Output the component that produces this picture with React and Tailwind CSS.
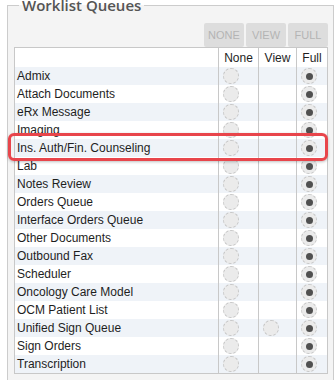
import React from "react";

const queues = [
    { name: "Admix" },
    { name: "Attach Documents" },
    { name: "eRx Message" },
    { name: "Imaging" },
    { name: "Ins. Auth/Fin. Counseling", highlight: true },
    { name: "Lab" },
    { name: "Notes Review" },
    { name: "Orders Queue" },
    { name: "Interface Orders Queue" },
    { name: "Other Documents" },
    { name: "Outbound Fax" },
    { name: "Scheduler" },
    { name: "Oncology Care Model" },
    { name: "OCM Patient List" },
    { name: "Unified Sign Queue", view: true },
    { name: "Sign Orders" },
    { name: "Transcription" },
];

function Radio({ checked }) {
    return (
        <span className="ml-[4px] flex h-4 w-4 items-center justify-center rounded-full border border-dashed border-[#c6c6c6] bg-[#ebebeb]">
            {checked && <span className="h-[7px] w-[7px] rounded-full bg-[#505050]"></span>}
        </span>
    );
}

function App() {
    return (
        <div className="h-[380px] overflow-hidden bg-white font-['Liberation_Sans',Arial,sans-serif] text-[12px] text-[#1e1e1e]">
            <fieldset className="ml-[7px] mr-[2px] border border-[#cccccc] bg-[#f4f4f4] pl-[6px] pr-[5px] pt-[13px] pb-4">
                <legend className="ml-[5px] px-[3px] font-['Open_Sans',sans-serif] text-[15px] leading-[10px] font-semibold text-[#555555]">
                    Worklist Queues
                </legend>

                <div className="flex justify-end gap-[2px]">
                    {["None", "View", "Full"].map((label) => (
                        <button
                            key={label}
                            className="h-[24px] w-[40px] rounded-[2px] bg-[#dddddd] text-[11px] uppercase text-[#b4b4b4]"
                        >
                            {label}
                        </button>
                    ))}
                </div>

                <div className="w-[314px] border border-[#c8c8c8] bg-white">
                    <div className="grid h-[19px] grid-cols-[204px_40px_38px_30px] items-center text-center">
                        <div className="h-full border-r border-[#c8c8c8]"></div>
                        <div className="flex h-full items-center justify-center border-r border-[#c8c8c8]">None</div>
                        <div className="flex h-full items-center justify-center border-r border-[#c8c8c8]">View</div>
                        <div className="flex h-full items-center justify-center">Full</div>
                    </div>

                    {queues.map((q, i) => (
                        <div
                            key={q.name}
                            className={`relative grid h-[18px] grid-cols-[204px_40px_38px_30px] ${i % 2 === 0 ? "bg-[#eff3f8]" : "bg-white"}`}
                        >
                            <div className="flex items-center border-r border-[#c8c8c8] pl-[2px] whitespace-nowrap">{q.name}</div>
                            <div className="flex items-center border-r border-[#c8c8c8]">
                                <Radio />
                            </div>
                            <div className="flex items-center border-r border-[#c8c8c8]">
                                {q.view && <Radio />}
                            </div>
                            <div className="flex items-center">
                                <Radio checked />
                            </div>
                            {q.highlight && (
                                <div className="pointer-events-none absolute -left-[7px] -right-[1px] -top-[6px] z-10 h-[28px] rounded-[6px] border-[3px] border-[#e8454b] shadow-[0_1px_3px_rgba(0,0,0,0.25)]"></div>
                            )}
                        </div>
                    ))}
                </div>
            </fieldset>
        </div>
    );
}

export default App;
